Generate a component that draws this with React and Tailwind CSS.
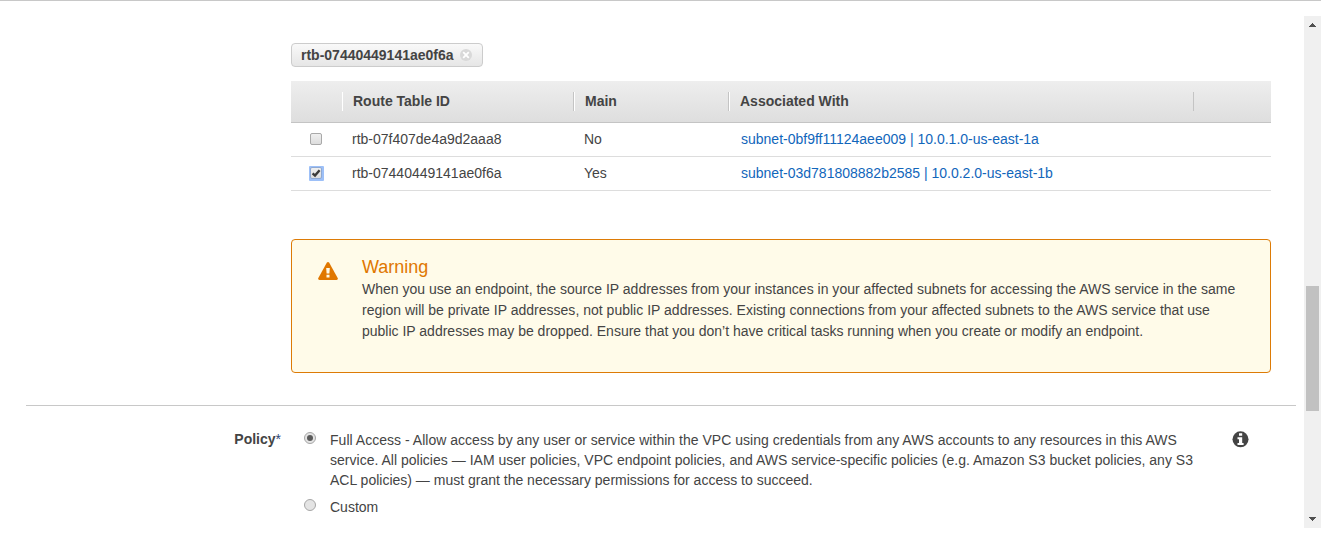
const ROWS = [
  { id: 'rtb-07f407de4a9d2aaa8', main: 'No', subnet: 'subnet-0bf9ff11124aee009 | 10.0.1.0-us-east-1a', checked: false },
  { id: 'rtb-07440449141ae0f6a', main: 'Yes', subnet: 'subnet-03d781808882b2585 | 10.0.2.0-us-east-1b', checked: true },
];

function Checkbox({ checked }) {
  return (
    <svg width="16" height="16" viewBox="0 0 16 16" role="checkbox" aria-checked={checked}>
      <defs>
        <linearGradient id="box" x1="0" y1="0" x2="0" y2="1">
          <stop offset="0" stopColor="#f0f0f0" />
          <stop offset="1" stopColor="#dcdcdc" />
        </linearGradient>
      </defs>
      {checked && <rect x="1" y="1" width="15" height="15" rx="1" fill="#9dc0f8" />}
      <rect x="2.5" y="2.5" width="11" height="11" rx="1.5" fill="url(#box)" stroke={checked ? '#8fa9d2' : '#a9a9a9'} />
      {checked && <path d="M4.6 8.4 7 10.6 11.6 5.2" fill="none" stroke="#3a3a3a" strokeWidth="2.4" />}
    </svg>
  );
}

function Radio({ checked }) {
  return (
    <svg width="14" height="14" viewBox="0 0 14 14" className="block" role="radio" aria-checked={checked}>
      <circle cx="7" cy="7" r="5.5" fill="#e4e4e4" stroke="#a6a6a6" />
      {checked && <circle cx="7" cy="7" r="3" fill="#5a5a5a" />}
    </svg>
  );
}

function RouteTables() {
  return (
    <div className="w-[980px]">
      <div className="flex h-[42px] items-center border-b border-[#c4c4c4] bg-linear-to-b from-[#eeeeee] to-[#dedede] font-bold leading-[19px]">
        <div className="h-[19px] w-[51px]" />
        <div className="h-[19px] w-[232px] border-l border-r border-l-white border-r-[#c4c4c4] pl-[10px]">Route Table ID</div>
        <div className="h-[19px] w-[155px] border-l border-r border-l-white border-r-[#c4c4c4] pl-[10px]">Main</div>
        <div className="h-[19px] w-[465px] border-l border-r border-l-white border-r-[#c4c4c4] pl-[10px]">Associated With</div>
      </div>
      {ROWS.map((row) => (
        <div key={row.id} className="flex h-[34px] items-center border-b border-[#dddddd] pb-[2px]">
          <div className="w-[61px] pl-[17px]"><Checkbox checked={row.checked} /></div>
          <div className="w-[232px]">{row.id}</div>
          <div className="w-[157px]">{row.main}</div>
          <div className="text-[#1166bb]">{row.subnet}</div>
        </div>
      ))}
    </div>
  );
}

function Warning() {
  return (
    <div className="mt-12 flex h-[134px] w-[980px] rounded-[4px] border border-[#dd7b06] bg-[#fffbe9] pl-[26px] pt-[17px]">
      <svg width="20" height="18" viewBox="0 0 20 18" className="mt-[5px] shrink-0">
        <path d="M8.9.6Q10-.6 11.1.6L19.8 16.2Q20.2 18 18.6 18H1.4Q-.2 18 .2 16.2Z" fill="#e07700" />
        <path d="M8.2 6h3.6L11.4 11.6H8.6ZM8.5 12.8h3v2.6h-3Z" fill="#fffbe9" />
      </svg>
      <div className="ml-6 whitespace-nowrap">
        <h2 className="text-[18px] leading-[21px] text-[#e07700]">Warning</h2>
        <p className="pt-px leading-[21px]">
          <span className="tracking-[0.008px]">When you use an endpoint, the source IP addresses from your instances in your affected subnets for accessing the AWS service in the same</span><br />
          <span className="tracking-[0.012px]">region will be private IP addresses, not public IP addresses. Existing connections from your affected subnets to the AWS service that use</span><br />
          public IP addresses may be dropped. Ensure that you don’t have critical tasks running when you create or modify an endpoint.
        </p>
      </div>
    </div>
  );
}

function Policy() {
  return (
    <div className="flex pt-[23px]">
      <div className="w-[255px] text-right font-bold leading-5">Policy<span className="font-normal text-[#2d4675]">*</span></div>
      <div className="ml-[22px] w-[27px] pt-[2px]">
        <Radio checked />
        <div className="mt-[53px]"><Radio checked={false} /></div>
      </div>
      <div className="w-[902px] whitespace-nowrap leading-5">
        <p className="pt-px">
          <span className="tracking-[0.022px]">Full Access - Allow access by any user or service within the VPC using credentials from any AWS accounts to any resources in this AWS</span><br />
          <span className="tracking-[0.015px]">service. All policies — IAM user policies, VPC endpoint policies, and AWS service-specific policies (e.g. Amazon S3 bucket policies, any S3</span><br />
          ACL policies) — must grant the necessary permissions for access to succeed.
        </p>
        <p className="pt-[7px]">Custom</p>
      </div>
      <svg width="17" height="17" viewBox="0 0 17 17" className="mt-[2px]">
        <circle cx="8.5" cy="8.3" r="8" fill="#444" />
        <path d="M7 2.2h3.2v2.6H7ZM5.5 6.2H10.2v5.7h1.4v2H5.5v-2H7V8.2H5.5Z" fill="#fff" />
      </svg>
    </div>
  );
}

export default function App() {
  return (
    <div className="flex h-[537px] w-[1321px] overflow-hidden border-t border-[#c8c8c8] bg-white font-['Liberation_Sans',Arial,sans-serif] text-[14px] leading-5 text-[#444444]">
      <main className="h-[536px] w-[1304px] pl-[26px] pt-[42px]">
        <div className="pl-[265px]">
          <div className="mb-[14px] flex h-6 w-[192px] items-center rounded-[4px] border border-[#cccccc] bg-linear-to-b from-[#f9f9f9] to-[#e6e6e6] pl-[9px] font-bold">
            <span>rtb-07440449141ae0f6a</span>
            <svg width="12" height="12" viewBox="0 0 12 12" className="ml-[6px]">
              <circle cx="6" cy="6" r="6" fill="#d9d9d9" />
              <path d="m3.2 3.2 5.6 5.6m0-5.6-5.6 5.6" stroke="#fff" strokeWidth="1.8" />
            </svg>
          </div>
          <RouteTables />
          <Warning />
        </div>
        <div className="mt-8 w-[1270px] border-t border-[#c8c8c8]">
          <Policy />
        </div>
      </main>
      <div className="mt-[15px] flex h-[512px] w-[17px] flex-col items-center bg-[#f0f0f0]">
        <svg width="17" height="17" viewBox="0 0 17 17" shapeRendering="crispEdges"><path d="M8 7h1v1h1v1h1v1h1v1H5v-1h1V9h1V8h1Z" fill="#505050" /></svg>
        <div className="mt-[253px] h-[125px] w-[13px] bg-[#c1c1c1]" />
        <svg className="mt-auto" width="17" height="17" viewBox="0 0 17 17" shapeRendering="crispEdges"><path d="M5 6h7v1h-1v1h-1v1H9v1H8V9H7V8H6V7H5Z" fill="#505050" /></svg>
      </div>
    </div>
  );
}
